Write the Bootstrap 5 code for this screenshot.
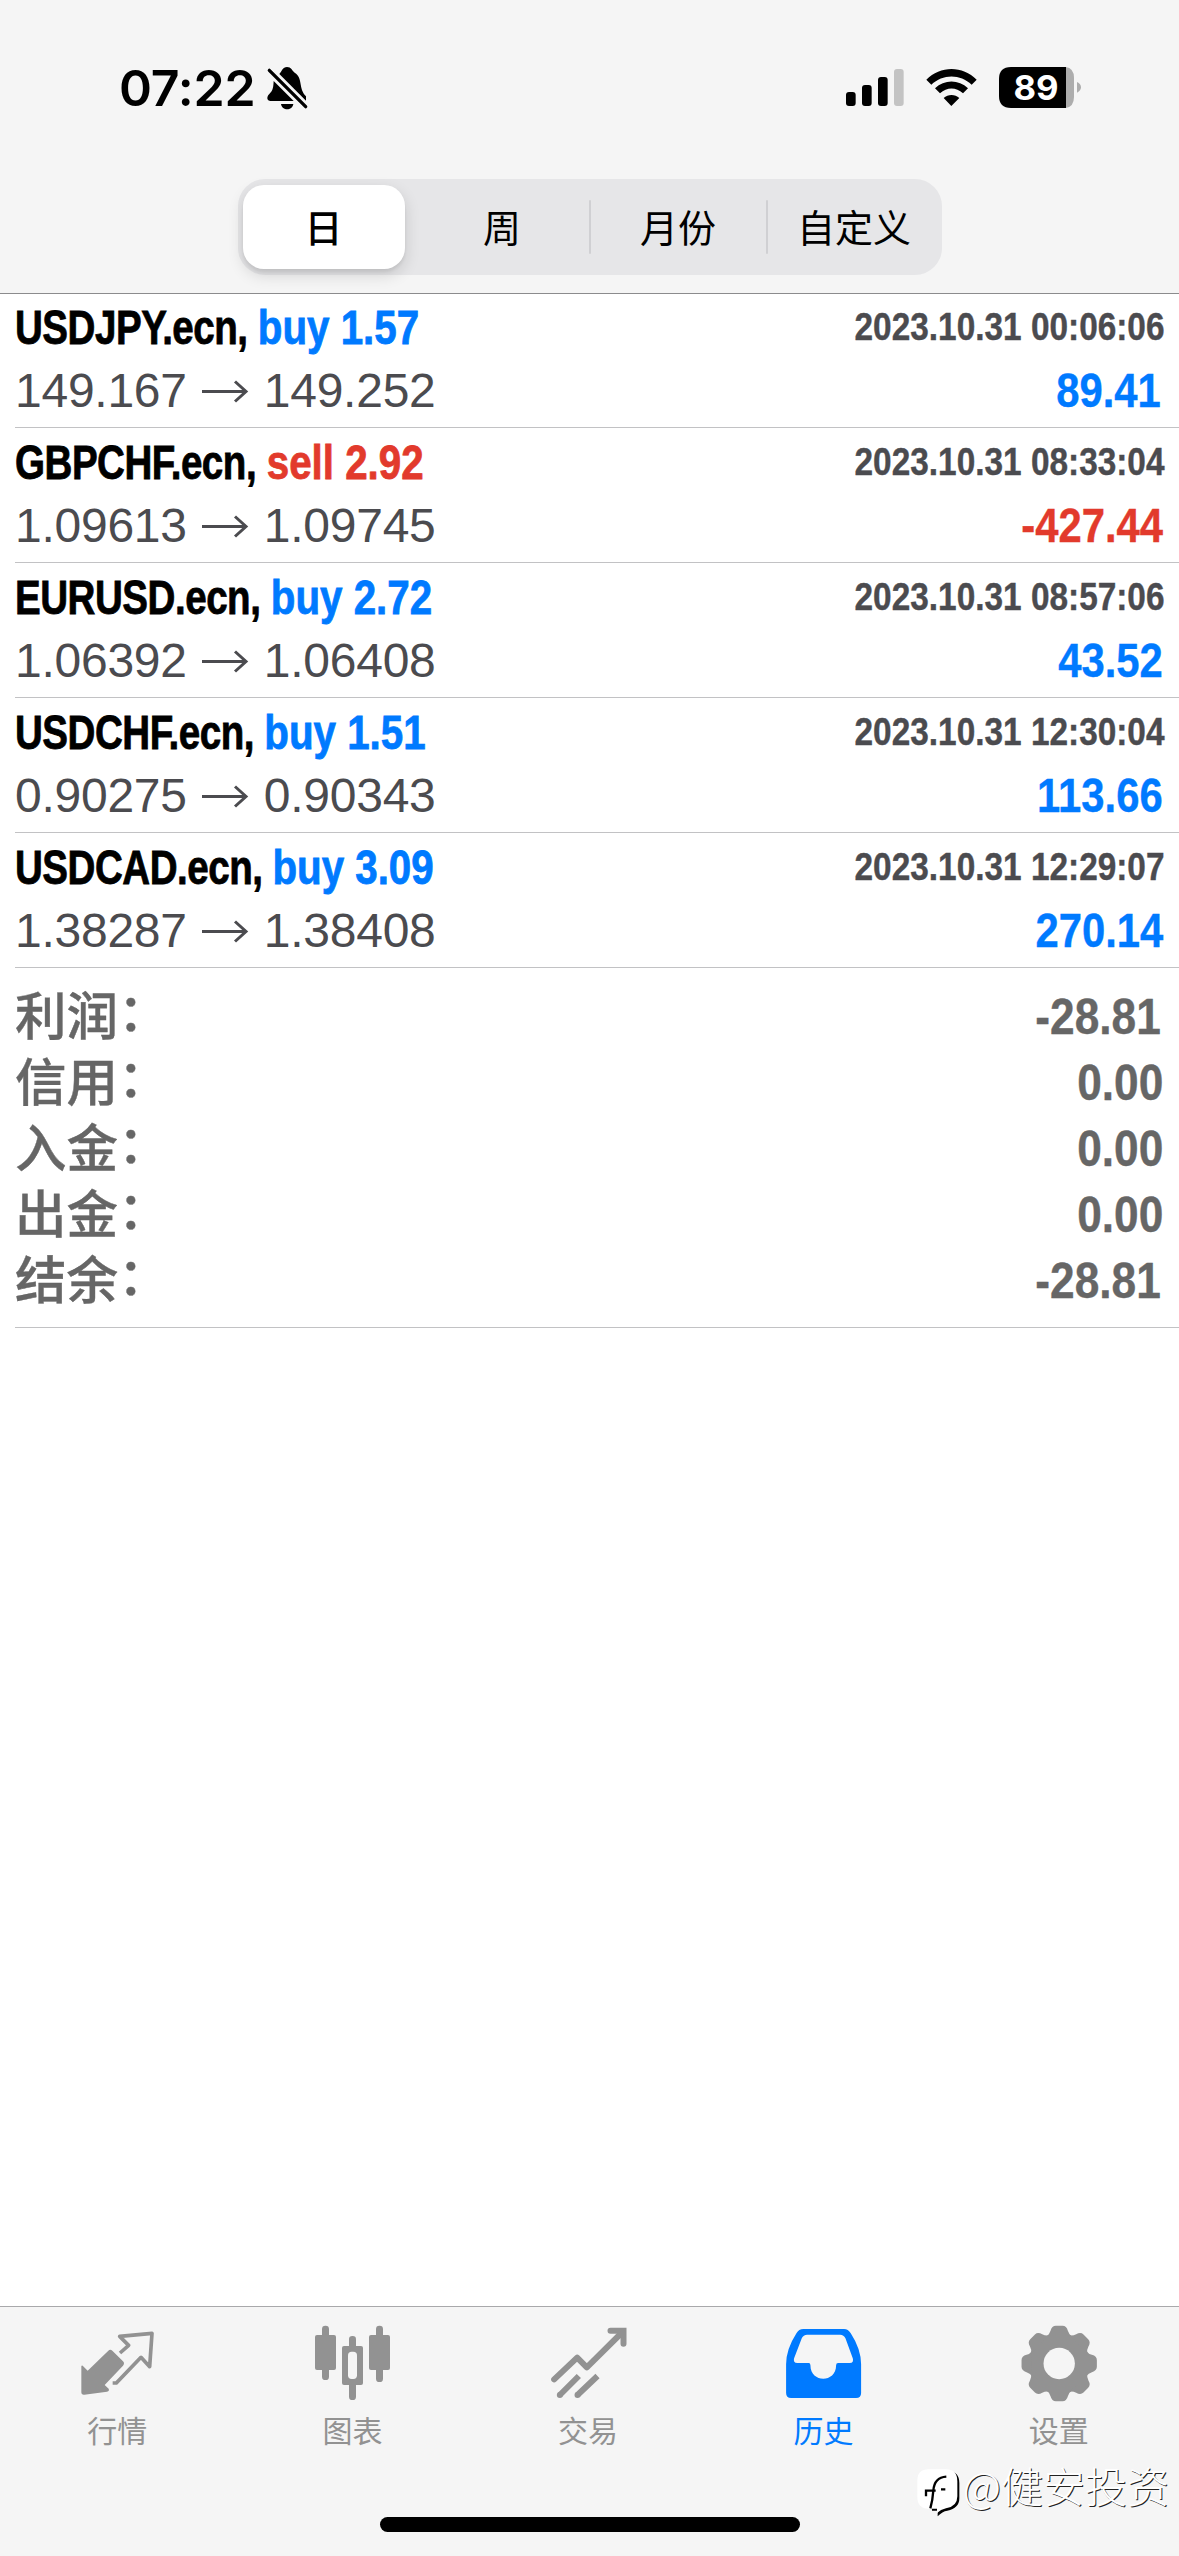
<!DOCTYPE html>
<html lang="zh-CN">
<head>
<meta charset="utf-8">
<meta name="viewport" content="width=device-width, initial-scale=1">
<title>历史</title>
<link href="https://cdn.jsdelivr.net/npm/bootstrap@5.3.0/dist/css/bootstrap.min.css" rel="stylesheet">
<style>
html,body{height:100%}
body{font-family:"Liberation Sans","Noto Sans CJK SC",sans-serif;background:#fff;color:#000;overflow:hidden}
svg{display:block;flex:none}
.phone{height:2556px;width:1179px}
.topbar{height:293px;background:#f5f5f5;box-shadow:0 1px #8b8b8d}
.statusbar{height:179px;padding:50px 89px 0 100px}
.statusbar svg{width:auto;height:80px}
.clock{font:600 50px/1 Inter,sans-serif;width:160px;padding:13px 0 0 19px;letter-spacing:-.2px}
.seg{width:704px;height:96px;border-radius:27px;background:#e6e6e8;padding:6px 0 6px 5px}
.seg>*{flex:none}
.seg .nav-link{font:400 38px/1 "Noto Sans CJK SC",sans-serif;color:#000;padding:0 0 3px}
.seg .seg-on{width:162px;height:84px;border-radius:21px;background:#fff;font-weight:500;box-shadow:0 6px 16px rgba(0,0,0,.14),0 3px 3px rgba(0,0,0,.06)}
.seg-day{width:173px}.seg-week{width:173px}.seg-month{width:175px}.seg-custom{width:173px}
.seg-rule{width:2px;height:54px;background:#d0d0d3;border-radius:1px}
.deals{padding-left:15px}
.deal{height:135px;border-bottom:1px solid #c2c2c4;padding:11px 15px 0 0}
.deal-line{height:63px}
.cond{font-weight:700;font-size:47.5px;line-height:1;white-space:pre;transform:scaleX(.812);transform-origin:0 0;-webkit-text-stroke:.8px;letter-spacing:-.6px}
.cond span{display:inline-block;letter-spacing:0;transform:scaleX(1.045);transform-origin:0 0}
.num{font-weight:700;font-size:47.5px;line-height:1;transform:scaleX(.88);transform-origin:100% 0;-webkit-text-stroke:.4px;margin-right:1px}
.num.ends-1{margin-right:3px}
.stamp{font-size:38.5px;color:#4b4b4f;transform:scaleX(.867);padding-top:4px;margin-right:0}
.price{font-size:48px;line-height:1;color:#4b4b4f;letter-spacing:-.25px}
.up{color:#007aff}.down{color:#e23a2c}
.totals{height:360px;border-bottom:1px solid #c2c2c4;padding:16px 15px 0 0;color:#666}
.total{height:66px}
.total-name{font:500 51.5px/58px "Noto Sans CJK SC",sans-serif;-webkit-text-stroke:.4px}
.total-colon{position:relative;top:-4px}
.total .num{font-size:50px;line-height:66px;transform:scaleX(.885)}
.tabbar{height:250px;background:#f5f5f5;border-top:1px solid #a9a9ab;padding-top:16px}
.tabbar .nav{padding-right:2px}
.tabbar .nav-link{padding:0;color:#929292;font:400 30px/1 "Noto Sans CJK SC",sans-serif}
.tabbar .nav-link.active{color:#007aff}
.tab-label{margin:11px 1px 0 0}
.homebar{width:420px;height:15px;border-radius:8px;background:#000;margin-top:auto;margin-bottom:24px}
.wmark{right:10px;bottom:38px}
.wmark-text{font:300 42px/1 "Noto Sans CJK SC",sans-serif;color:#fff;text-shadow:1px 1px .5px #222;margin-top:-15px}
</style>
</head>
<body>
<div class="phone d-flex flex-column position-relative">
  <header class="topbar position-relative flex-shrink-0 d-flex flex-column">
    <div class="statusbar d-flex justify-content-between align-items-start">
      <div class="d-flex">
        <span class="clock">07:22</span>
        <svg viewBox="480 0 180 240"><path d="M538 72C545 65 548 51 561 51S576 62 584 68C610 84 594 114 618 139V152zM521 93L581 153H512C500 153 499 140 508 132C520 121 520 109 521 93zM543 162H580C577 183 546 183 543 162z"/><path d="M508 61L617 170" stroke="#000" stroke-width="10" stroke-linecap="round"/></svg>
      </div>
      <svg viewBox="0 0 780 240">
        <rect x="48" y="126" width="29" height="42" rx="9"/><rect x="96" y="105" width="29" height="63" rx="9"/><rect x="144" y="81" width="29" height="87" rx="9"/><rect x="192" y="57" width="29" height="111" rx="9" fill="#c3c3c3"/>
        <path d="M289 89C331 46 398 46 440 89L425 104C391 71 338 71 304 104zM315 115C343 88 386 88 414 115L399 130C378 111 351 111 330 130zM341 144C354 132 375 132 388 144L364 168z"/>
        <path d="M707 51Q732 54 732 84V140Q732 170 707 174z" fill="#adadad"/><path d="M543 51H708V174H543Q507 174 507 138V87Q507 51 543 51z"/><path d="M741 96Q753 102 753 112T741 128z" fill="#adadad"/>
        <text x="618" y="150" font-family="Inter,sans-serif" font-weight="700" font-size="104" text-anchor="middle" fill="#fff">89</text>
      </svg>
    </div>
    <nav class="seg nav align-items-center flex-nowrap mx-auto">
      <div class="seg-day"><a class="nav-link seg-on d-flex align-items-center justify-content-center">日</a></div>
      <a class="seg-week nav-link text-center">周</a><i class="seg-rule"></i>
      <a class="seg-month nav-link text-center">月份</a><i class="seg-rule"></i>
      <a class="seg-custom nav-link text-center">自定义</a>
    </nav>
  </header>
  <main class="deals flex-grow-1" id="deals">
    <section class="totals">
      <div class="total d-flex justify-content-between"><span class="total-name">利润<span class="total-colon">：</span></span><span class="num ends-1">-28.81</span></div>
      <div class="total d-flex justify-content-between"><span class="total-name">信用<span class="total-colon">：</span></span><span class="num">0.00</span></div>
      <div class="total d-flex justify-content-between"><span class="total-name">入金<span class="total-colon">：</span></span><span class="num">0.00</span></div>
      <div class="total d-flex justify-content-between"><span class="total-name">出金<span class="total-colon">：</span></span><span class="num">0.00</span></div>
      <div class="total d-flex justify-content-between"><span class="total-name">结余<span class="total-colon">：</span></span><span class="num ends-1">-28.81</span></div>
    </section>
  </main>
  <footer class="tabbar flex-shrink-0 d-flex flex-column">
    <nav class="nav nav-fill flex-nowrap">
      <a class="nav-link w-100 d-flex flex-column align-items-center"><svg width="80" height="80" viewBox="53 84 240 240" fill="#929292"><path d="M67 212L82 227L144 167Q150 162 156 167L188 199Q194 205 188 212L133 270L145 281Q148 288 140 290L72 299Q63 300 63 291V214Q64 210 67 212z"/><path d="M179 174L205 151L178 124L275 115L268 215L242 187L168 264H157" fill="none" stroke="#929292" stroke-width="11" stroke-linejoin="round"/></svg><span class="tab-label">行情</span></a>
      <a class="nav-link w-100 d-flex flex-column align-items-center"><svg width="80" height="80" viewBox="759 84 240 240" fill="#929292"><rect x="765" y="120" width="63" height="105" rx="6"/><rect x="786" y="92" width="21" height="163" rx="10"/><rect x="927" y="120" width="63" height="105" rx="6"/><rect x="948" y="92" width="21" height="169" rx="10"/><rect x="867" y="123" width="21" height="192" rx="10"/><rect x="846" y="153" width="63" height="117" rx="6"/><rect x="864" y="170" width="27" height="82" rx="11" fill="#f5f5f5"/></svg><span class="tab-label">图表</span></a>
      <a class="nav-link w-100 d-flex flex-column align-items-center"><svg width="80" height="80" viewBox="55.5 84 240 240" fill="none" stroke="#929292" stroke-width="18"><path d="M71 253L140 188L169 217L276 111" stroke-linejoin="round" stroke-linecap="round"/><path d="M240 107H279V146" stroke-linecap="round"/><path d="M88 300L145 243M141 300L201 243" /><path d="M88 300h.1M141 300h.1" stroke-linecap="round"/></svg><span class="tab-label">交易</span></a>
      <a class="nav-link active w-100 d-flex flex-column align-items-center"><svg width="80" height="80" viewBox="761.7 84 240 240"><path fill="#007aff" fill-rule="evenodd" d="M820 102H942Q954 102 962 115Q993 163 993 208V294Q993 309 978 309H783Q768 309 768 294V208Q768 163 799 115Q806 102 820 102zM831 119Q820 119 815 130L792 190Q788 204 802 204H836Q841 204 841 211C841 265 918 265 918 211Q918 204 924 204H959Q972 204 968 190L946 130Q941 119 930 119z"/></svg><span class="tab-label">历史</span></a>
      <a class="nav-link w-100 d-flex flex-column align-items-center"><svg width="80" height="80" viewBox="357.9 84 240 240"><g transform="translate(478.5 205.500)"><g fill="#929292" id="teeth"><circle r="91"/></g><circle r="47" fill="#f5f5f5"/></g></svg><span class="tab-label">设置</span></a>
    </nav>
    <div class="homebar mx-auto"></div>
  </footer>
  <div class="wmark position-absolute d-flex align-items-center">
    <svg width="48" height="52" viewBox="45 515 144 156"><path d="M90 530H145Q178 532 178 566V612Q178 642 142 649Q127 651 113 666V649H96Z" fill="#000"/><path d="M86 525H138Q172 525 172 561V606Q172 637 138 642Q122 645 111 656V643H86Q52 643 52 608V559Q52 525 86 525z" fill="#fff"/><path d="M91 642Q98 618 100 589Q103 549 139 547M78 606V589H107M123 585H136" fill="none" stroke="#000" stroke-width="7"/></svg>
    <span class="wmark-text">@健安投资</span>
  </div>
</div>
<script src="https://cdn.jsdelivr.net/npm/bootstrap@5.3.0/dist/js/bootstrap.bundle.min.js"></script>
<script>
const deals = [
  ['USDJPY.ecn','buy','1.57','149.167','149.252','2023.10.31 00:06:06','89.41'],
  ['GBPCHF.ecn','sell','2.92','1.09613','1.09745','2023.10.31 08:33:04','-427.44'],
  ['EURUSD.ecn','buy','2.72','1.06392','1.06408','2023.10.31 08:57:06','43.52'],
  ['USDCHF.ecn','buy','1.51','0.90275','0.90343','2023.10.31 12:30:04','113.66'],
  ['USDCAD.ecn','buy','3.09','1.38287','1.38408','2023.10.31 12:29:07','270.14']
];
document.getElementById('deals').insertAdjacentHTML('afterbegin', deals.map(([s,side,lot,from,to,time,pl]) => `
  <article class="deal">
    <div class="deal-line d-flex justify-content-between"><span class="cond">${s}, <span class="${side==='buy'?'up':'down'}">${side} ${lot}</span></span><span class="num stamp">${time}</span></div>
    <div class="deal-line d-flex justify-content-between"><span class="price d-flex">${from}<svg width="77" height="48" viewBox="0 0 77 48" fill="none" stroke="#4b4b4f" stroke-width="3"><path d="M15 24.500H59M48 14.500L59 24.500L48 34.500"/></svg>${to}</span><span class="num ${pl<0?'down':'up'}${pl.endsWith('1')?' ends-1':''}">${pl}</span></div>
  </article>`).join(''));
// eight rounded gear teeth around the hub
document.getElementById('teeth').innerHTML += [0,45,90,135,180,225,270,315].map(a =>
  `<path transform="rotate(${a})" d="M-37-82Q-29-88-26-98Q-22-113-10-113H10Q22-113 26-98Q29-88 37-82z"/>`).join('');
</script>
</body>
</html>
